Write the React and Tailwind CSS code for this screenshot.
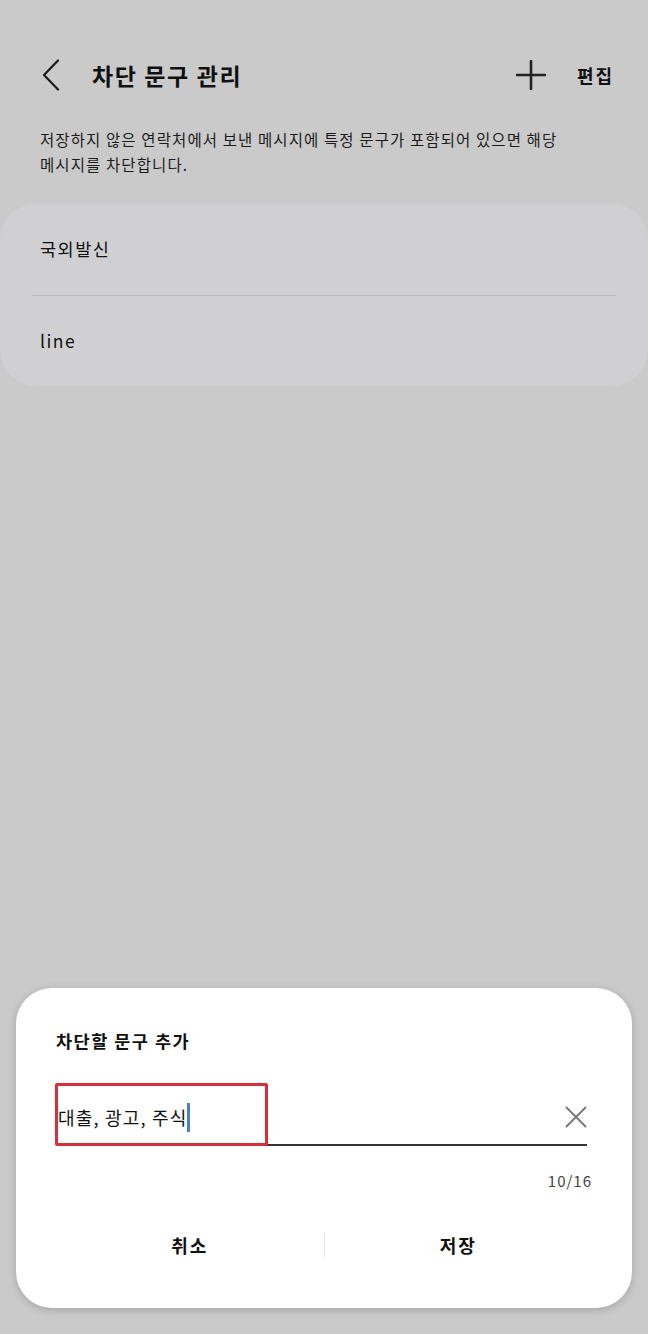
const KR = { fontFamily: '"Noto Sans CJK KR", "Noto Sans", sans-serif' };

function BackIcon() {
  return (
    <svg width="20" height="32" viewBox="0 0 20 32" fill="none">
      <path d="M17 1.5 L3 16 L17 30.5" stroke="#1a1a1a" strokeWidth="2.2" strokeLinecap="round" strokeLinejoin="round" />
    </svg>
  );
}

function PlusIcon() {
  return (
    <svg width="30" height="30" viewBox="0 0 30 30" fill="none">
      <path d="M15 1 V29 M1 15 H29" stroke="#222" strokeWidth="2.6" strokeLinecap="round" />
    </svg>
  );
}

function ClearIcon() {
  return (
    <svg width="22" height="22" viewBox="0 0 22 22" fill="none">
      <path d="M1.5 1.5 L20.5 20.5 M20.5 1.5 L1.5 20.5" stroke="#7a7a7a" strokeWidth="2" strokeLinecap="round" />
    </svg>
  );
}

export default function App() {
  const phrases = ['국외발신', 'line'];

  return (
    <div className="h-[1334px] bg-[#cacaca] flex flex-col text-[#111]" style={KR}>
      {/* header */}
      <div className="mt-[47px] h-[56px] flex items-center pl-[41px] pr-[34px]">
        <BackIcon />
        <h1 className="ml-[31px] text-[23px] font-bold leading-none tracking-[1.6px]">차단 문구 관리</h1>
        <div className="ml-auto flex items-center">
          <PlusIcon />
          <span className="ml-[31px] text-[18px] font-bold tracking-[2px]">편집</span>
        </div>
      </div>

      <p className="mt-[24px] px-[40px] text-[15.5px] leading-[25px] tracking-[1.1px] text-[#1c1c1c]">
        저장하지 않은 연락처에서 보낸 메시지에 특정 문구가 포함되어 있으면 해당
        <br />
        메시지를 차단합니다.
      </p>

      {/* phrase list */}
      <div className="mt-[27px] bg-[#d0d0d2] rounded-[36px] px-[32px]">
        {phrases.map((p, i) => (
          <div
            key={p}
            className={`h-[91px] flex items-center px-[8px] text-[17.5px] tracking-[1.5px] ${i > 0 ? 'border-t border-[#bcbcbe]' : ''}`}
          >
            {p}
          </div>
        ))}
      </div>

      <div className="flex-1" />

      {/* dialog */}
      <div className="mx-[16px] mb-[26px] bg-white rounded-[36px] shadow-[0_2px_8px_rgba(0,0,0,0.18)] px-[40px] pt-[40px] pb-[35px]">
        <h2 className="text-[17.5px] font-bold leading-[26px] tracking-[1.5px]">차단할 문구 추가</h2>

        <div className="relative mt-[36px] ml-[3px] mr-[5px] h-[56px] flex items-center border-b-2 border-[#333]">
          <span className="text-[18px] text-[#111] -ml-[1px] tracking-[1.2px]">대출, 광고, 주식</span>
          <span className="w-[3px] h-[29px] bg-[#4a7fd0]" />
          <span className="ml-auto">
            <ClearIcon />
          </span>
          <div className="absolute left-[-4px] top-[-7px] w-[213px] h-[63px] border-[3px] border-[#d72f3b] rounded-[2px]" />
        </div>

        <div className="mt-[25px] text-right text-[15px] leading-[20px] text-[#444] tracking-[1px]">10/16</div>

        <div className="mt-[26px] h-[56px] flex items-center">
          <button className="flex-1 text-[18px] font-bold text-[#111] tracking-[2px]">취소</button>
          <span className="w-px h-[26px] bg-[#e6e6e6]" />
          <button className="flex-1 text-[18px] font-bold text-[#111] tracking-[2px]">저장</button>
        </div>
      </div>
    </div>
  );
}
